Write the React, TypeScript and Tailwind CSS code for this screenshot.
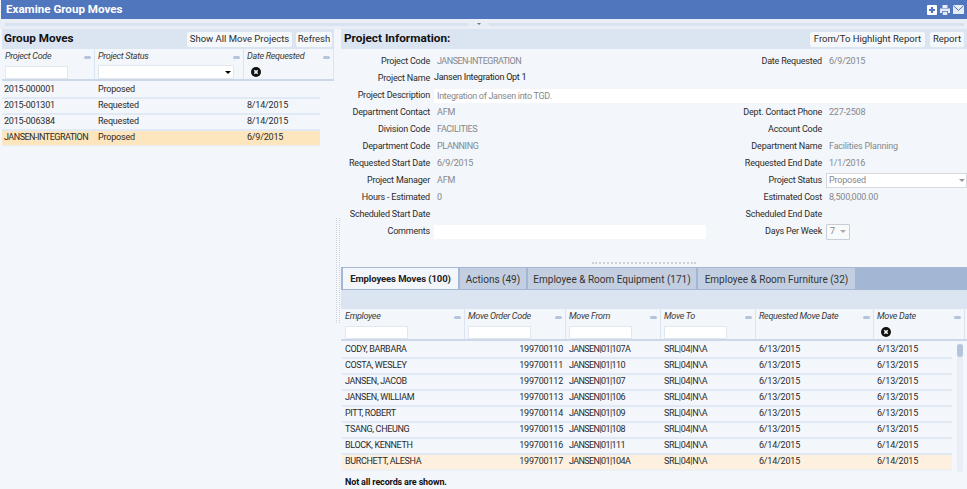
import React from "react";

const Close = () => (
  <svg width="10" height="10" viewBox="0 0 11 11" className="block">
    <circle cx="5.5" cy="5.5" r="5.5" fill="#111" />
    <path d="M3.6 3.6l3.8 3.8M7.4 3.6l-3.8 3.8" stroke="#fff" strokeWidth="1.6" />
  </svg>
);

const Dash = () => <span className="w-[7px] h-[3px] rounded-sm bg-[#b4c4dc] shrink-0 mt-[7px]" />;

const Btn = ({ children, w }: { children: React.ReactNode; w: string }) => (
  <div className={`${w} h-[15px] bg-[#f5f8fb] rounded-[2px] flex items-center justify-center text-[9.5px] text-[#2b2b2b] whitespace-nowrap`}>
    {children}
  </div>
);

const Head = ({ title, w, filter }: { title: string; w: string; filter: "input" | "select" | "close" | "none" }) => (
  <div className={`${w} shrink-0 h-full border-r border-[#dbe4f1] pl-[3px] pr-[3px] flex flex-col`}>
    <div className="flex justify-between h-[17px] leading-[15px]">
      <span className="italic text-[9px] tracking-[-0.3px] text-[#3a3a3a] whitespace-nowrap">{title}</span>
      <Dash />
    </div>
    {filter === "input" && <div className="w-[63px] h-[13px] bg-white border border-[#e3e8ef]" />}
    {filter === "select" && (
      <div className="w-[136px] h-[14px] bg-white border border-[#e3e8ef] flex items-center justify-end pr-[2px]">
        <span className="w-0 h-0 border-x-[3px] border-x-transparent border-t-[3px] border-t-black" />
      </div>
    )}
    {filter === "close" && <div className="ml-[4px] mt-px"><Close /></div>}
  </div>
);

const leftRows = [
  ["2015-000001", "Proposed", ""],
  ["2015-001301", "Requested", "8/14/2015"],
  ["2015-006384", "Requested", "8/14/2015"],
  ["JANSEN-INTEGRATION", "Proposed", "6/9/2015"],
];

const Field = ({ label, value, dark, upper, tight }: { label: string; value?: string; dark?: boolean; upper?: boolean; tight?: boolean }) => (
  <>
    <div className="text-right text-[9px] tracking-[-0.2px] text-[#2b2b2b] whitespace-nowrap">{label}</div>
    <div
      className={`pl-[7px] text-[9px] whitespace-nowrap ${tight ? "tracking-[-0.5px]" : upper ? "tracking-[-0.35px]" : "tracking-[-0.2px]"} ${
        dark ? "text-[#222] -ml-[3px] -mt-px tracking-[-0.25px]" : "text-[#85888c]"
      }`}
    >
      {value}
    </div>
  </>
);

const Row = ({ l, r }: { l: React.ReactNode; r?: React.ReactNode }) => (
  <div className="h-[17px] flex items-center">
    <div className="w-[392px] shrink-0 grid grid-cols-[89px_1fr] items-center">{l}</div>
    <div className="flex-1 grid grid-cols-[89px_1fr] items-center">{r}</div>
  </div>
);

const empRows = [
  ["CODY, BARBARA", "199700110", "JANSEN|01|107A", "6/13/2015"],
  ["COSTA, WESLEY", "199700111", "JANSEN|01|110", "6/13/2015"],
  ["JANSEN, JACOB", "199700112", "JANSEN|01|107", "6/13/2015"],
  ["JANSEN, WILLIAM", "199700113", "JANSEN|01|106", "6/13/2015"],
  ["PITT, ROBERT", "199700114", "JANSEN|01|109", "6/13/2015"],
  ["TSANG, CHEUNG", "199700115", "JANSEN|01|108", "6/13/2015"],
  ["BLOCK, KENNETH", "199700116", "JANSEN|01|111", "6/14/2015"],
  ["BURCHETT, ALESHA", "199700117", "JANSEN|01|104A", "6/14/2015"],
];

const Tab = ({ children, active, w }: { children: React.ReactNode; active?: boolean; w: string }) => (
  <div className={`${w} h-[21px] mr-[2px] pt-px flex items-center justify-center whitespace-nowrap ${active ? "bg-[#f3f6fa] font-bold text-[#222] text-[9.5px] tracking-[-0.1px]" : "bg-[#c3cfe0] text-[#333] text-[10px]"}`}>
    {children}
  </div>
);

export default function App() {
  return (
    <div className="w-[967px] h-[489px] overflow-hidden flex flex-col bg-[#f3f6fa] text-[#2b2b2b] font-['Roboto','Noto_Sans',sans-serif]">
      <div className="h-[19px] shrink-0 ml-px bg-[#5076be] flex items-center justify-between pl-[5px] pr-[3px]">
        <span className="text-white font-bold text-[11.6px] leading-none">Examine Group Moves</span>
        <div className="flex items-center gap-[3px]">
          <svg width="10" height="10" viewBox="0 0 10 10">
            <rect width="10" height="10" rx="1" fill="#fff" />
            <path d="M5 2v6M2 5h6" stroke="#5076be" strokeWidth="2.2" />
          </svg>
          <svg width="10" height="10" viewBox="0 0 10 10">
            <path d="M2.5 0h5v3h-5zM0 3.5h10V8H8V6H2v2H0zM2.8 6.8h4.4V10H2.8z" fill="#e6ecf7" />
          </svg>
          <svg width="11" height="9" viewBox="0 0 11 9">
            <rect width="11" height="9" fill="#e6ecf7" />
            <path d="M0.3 0.6L5.5 5.4L10.7 0.6" stroke="#5076be" strokeWidth="1" fill="none" />
          </svg>
        </div>
      </div>

      <div className="h-[10px] shrink-0 bg-[#e9eef7] pl-[5px] pr-[3px] pt-[4px]">
        <div className="h-[3px] bg-[#d9e2f0] flex justify-center">
          <div className="w-[21px] h-[3px] bg-[#e6ecf5] ml-[-12px] flex justify-center">
            <span className="w-0 h-0 border-x-[2px] border-x-transparent border-t-[2px] border-t-[#777]" />
          </div>
        </div>
      </div>

      <div className="flex-1 flex min-h-0">
        {/* Left panel */}
        <div className="w-[334px] shrink-0 pl-[2px]">
          <div className="h-[20px] bg-[#dbe4f1] flex items-center pl-[2px] pr-[2px]">
            <span className="font-bold text-[11.7px] text-[#111] flex-1">Group Moves</span>
            <div className="flex gap-[4px]">
              <Btn w="w-[105px]">Show All Move Projects</Btn>
              <Btn w="w-[36px]">Refresh</Btn>
            </div>
          </div>
          <div className="h-[32px] mb-[2px] flex border-b-2 border-[#ccd8ea]">
            <Head title="Project Code" w="w-[93px]" filter="input" />
            <Head title="Project Status" w="w-[149px]" filter="select" />
            <Head title="Date Requested" w="w-[90px]" filter="close" />
          </div>
          <div className="w-[318px]">
            {leftRows.map((r, i) => (
              <div key={i} className={`h-[16px] flex items-center text-[9px] tracking-[-0.2px] border-b-2 ${i === 3 ? "bg-[#fde6bd] border-[#eef1f4]" : "border-[#e1e9f4]"}`}>
                <div className={`w-[93px] shrink-0 whitespace-nowrap pl-[2px] ${i === 3 ? "tracking-[-0.5px]" : ""}`}>{r[0]}</div>
                <div className="w-[149px] shrink-0 pl-[3px]">{r[1]}</div>
                <div className="pl-[3px]">{r[2]}</div>
              </div>
            ))}
          </div>
        </div>

        {/* Vertical splitter */}
        <div className="w-[7px] shrink-0 flex justify-center pt-[189px]">
          <div className="w-[4px] h-[105px] border-x border-dotted border-[#cdd3db]" />
        </div>

        {/* Right panel */}
        <div className="flex-1 min-w-0 flex flex-col">
          <div className="h-[20px] shrink-0 bg-[#dbe4f1] flex items-center pl-[3px] pr-[3px]">
            <span className="font-bold text-[11.8px] text-[#111] flex-1">Project Information:</span>
            <div className="flex gap-[5px]">
              <Btn w="w-[115px]">From/To Highlight Report</Btn>
              <Btn w="w-[34px]">Report</Btn>
            </div>
          </div>

          <div className="h-[218px] shrink-0 pt-[4px] flex flex-col">
            <Row l={<Field label="Project Code" value="JANSEN-INTEGRATION" tight />} r={<Field label="Date Requested" value="6/9/2015" />} />
            <Row l={<Field label="Project Name" value="Jansen Integration Opt 1" dark />} />
            <div className="h-[17px] flex items-center">
              <div className="w-[89px] shrink-0 text-right text-[9px] tracking-[-0.2px] whitespace-nowrap">Project Description</div>
              <div className="ml-[4px] flex-1 h-[14px] bg-white pl-[3px] text-[9px] tracking-[-0.3px] leading-[14px] text-[#85888c]">Integration of Jansen into TGD.</div>
            </div>
            <Row l={<Field label="Department Contact" value="AFM" />} r={<Field label="Dept. Contact Phone" value="227-2508" />} />
            <Row l={<Field label="Division Code" value="FACILITIES" upper />} r={<Field label="Account Code" />} />
            <Row l={<Field label="Department Code" value="PLANNING" upper />} r={<Field label="Department Name" value="Facilities Planning" />} />
            <Row l={<Field label="Requested Start Date" value="6/9/2015" />} r={<Field label="Requested End Date" value="1/1/2016" />} />
            <Row
              l={<Field label="Project Manager" value="AFM" />}
              r={
                <>
                  <div className="text-right text-[9px] tracking-[-0.2px] whitespace-nowrap">Project Status</div>
                  <div className="ml-[4px] h-[15px] bg-white border border-[#d5d9de] flex items-center justify-between pl-[2px] pr-[1px] text-[9px] tracking-[-0.2px] text-[#85888c]">
                    Proposed
                    <span className="w-0 h-0 border-x-[3px] border-x-transparent border-t-[3px] border-t-[#999]" />
                  </div>
                </>
              }
            />
            <Row l={<Field label="Hours - Estimated" value="0" />} r={<Field label="Estimated Cost" value="8,500,000.00" />} />
            <Row l={<Field label="Scheduled Start Date" />} r={<Field label="Scheduled End Date" />} />
            <Row
              l={
                <>
                  <div className="text-right text-[9px] tracking-[-0.2px]">Comments</div>
                  <div className="ml-[4px] w-[272px] h-[14px] bg-white" />
                </>
              }
              r={
                <>
                  <div className="text-right text-[9px] tracking-[-0.2px] whitespace-nowrap">Days Per Week</div>
                  <div className="ml-[4px] w-[24px] h-[16px] bg-[#f8fafc] border border-[#c9ced4] rounded-[1px] flex items-center gap-[5px] pl-[3px] text-[9px] text-[#85888c]">
                    7
                    <span className="w-0 h-0 border-x-[3px] border-x-transparent border-t-[3px] border-t-[#aaa]" />
                  </div>
                </>
              }
            />
            <div className="mt-auto mb-[3px] ml-[251px] w-[104px] h-[2px] border-t-2 border-dotted border-[#cdd3db]" />
          </div>

          {/* Tabs */}
          <div className="h-[23px] shrink-0 bg-[#a3b6d3] pt-px pl-[2px] flex">
            <Tab active w="w-[115px]">Employees Moves (100)</Tab>
            <Tab w="w-[66px]">Actions (49)</Tab>
            <Tab w="w-[168px]">Employee &amp; Room Equipment (171)</Tab>
            <Tab w="w-[157px]">Employee &amp; Room Furniture (32)</Tab>
          </div>
          <div className="h-[19px] shrink-0 bg-[#dbe4f1]" />

          <div className="h-[32px] mb-[2px] shrink-0 flex border-b-2 border-[#ccd8ea] pl-px">
            <Head title="Employee" w="w-[123px]" filter="input" />
            <Head title="Move Order Code" w="w-[101px]" filter="input" />
            <Head title="Move From" w="w-[95px]" filter="input" />
            <Head title="Move To" w="w-[95px]" filter="input" />
            <Head title="Requested Move Date" w="w-[118px]" filter="none" />
            <Head title="Move Date" w="w-[91px]" filter="close" />
          </div>

          <div className="flex h-[129px] shrink-0 pl-px">
            <div className="w-[610px] shrink-0">
              {empRows.map((r, i) => (
                <div key={i} className={`h-[16px] flex items-center text-[9px] tracking-[-0.2px] border-b-2 ${i === 7 ? "bg-[#fdf0de] border-[#eef1f4]" : "border-[#e1e9f4]"}`}>
                  <div className="w-[123px] shrink-0 pl-[3px] whitespace-nowrap tracking-[-0.35px]">{r[0]}</div>
                  <div className="w-[101px] shrink-0 pr-[3px] text-right">{r[1]}</div>
                  <div className="w-[95px] shrink-0 pl-[3px] whitespace-nowrap tracking-[-0.6px]">{r[2]}</div>
                  <div className="w-[95px] shrink-0 pl-[3px] whitespace-nowrap tracking-[-0.3px]">SRL|04|N\A</div>
                  <div className="w-[118px] shrink-0 pl-[3px]">{r[3]}</div>
                  <div className="pl-[3px]">{r[3]}</div>
                </div>
              ))}
            </div>
            <div className="ml-[5px] w-[6px] h-[129px] bg-[#e9eef6] rounded-sm">
              <div className="w-[6px] h-[13px] mt-px bg-[#b4c4dc] rounded-sm" />
            </div>
          </div>

          <div className="pl-[4px] pt-[4px] text-[9px] tracking-[-0.15px] font-bold text-[#111]">Not all records are shown.</div>
        </div>
      </div>
    </div>
  );
}
